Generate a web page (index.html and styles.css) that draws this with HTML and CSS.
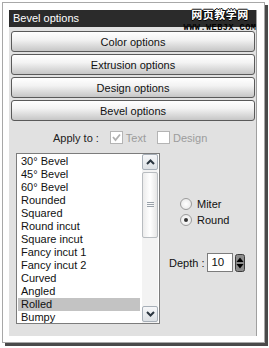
FILE: index.html
```html
<!DOCTYPE html>
<html>
<head>
<meta charset="utf-8">
<link rel="stylesheet" href="styles.css">
</head>
<body>
<div class="frame">
  <div class="panel">
    <div class="title">Bevel options
      <div class="wm"><span class="wm-cn">网页教学网</span><span class="wm-en">WWW.WEBJX.COM</span></div>
    </div>
    <div class="buttons">
      <div class="btn">Color options</div>
      <div class="btn">Extrusion options</div>
      <div class="btn">Design options</div>
      <div class="btn">Bevel options</div>
    </div>
    <div class="apply">
      <span class="apply-label">Apply to :</span>
      <span class="check"><svg width="11" height="11" viewBox="0 0 11 11"><polyline points="2,5 4.5,8 9,2.5" fill="none" stroke="#b0b0b0" stroke-width="1.8"/></svg></span><span class="dis">Text</span>
      <span class="check"></span><span class="dis">Design</span>
    </div>
    <div class="main">
      <div class="list">
        <ul class="items">
          <li>30° Bevel</li>
          <li>45° Bevel</li>
          <li>60° Bevel</li>
          <li>Rounded</li>
          <li>Squared</li>
          <li>Round incut</li>
          <li>Square incut</li>
          <li>Fancy incut 1</li>
          <li>Fancy incut 2</li>
          <li>Curved</li>
          <li>Angled</li>
          <li class="sel">Rolled</li>
          <li>Bumpy</li>
        </ul>
        <div class="scroll">
          <div class="sbtn"><svg width="9" height="6" viewBox="0 0 9 6"><polyline points="1,5 4.5,1.5 8,5" fill="none" stroke="#2b3640" stroke-width="2"/></svg></div>
          <div class="thumb"><svg width="7" height="6" viewBox="0 0 7 6"><path d="M0 0.5H7M0 2.5H7M0 4.5H7" stroke="#9aa2aa" stroke-width="1"/></svg></div>
          <div class="track"></div>
          <div class="sbtn"><svg width="9" height="6" viewBox="0 0 9 6"><polyline points="1,1 4.5,4.5 8,1" fill="none" stroke="#2b3640" stroke-width="2"/></svg></div>
        </div>
      </div>
      <div class="side">
        <div class="radios">
          <div class="radio"><span class="rb"></span><span>Miter</span></div>
          <div class="radio"><span class="rb on"></span><span>Round</span></div>
        </div>
        <div class="depth">
          <span class="depth-label">Depth :</span>
          <span class="input">10</span>
          <svg class="spin" width="10" height="18" viewBox="0 0 10 18"><rect x="0.5" y="0.5" width="9" height="17" rx="2" fill="#8c8c8c" stroke="#3c3c3c"/><polygon points="1.5,8 5,3.5 8.5,8" fill="#000"/><polygon points="1.5,10 5,14.5 8.5,10" fill="#000"/></svg>
        </div>
      </div>
    </div>
  </div>
</div>
</body>
</html>
```

FILE: styles.css
```css
* { box-sizing: border-box; }
body {
  margin: 0;
  width: 269px;
  height: 348px;
  background: #fff;
  font-family: "Liberation Sans", Arial, sans-serif;
  font-size: 11px;
  color: #111;
  overflow: hidden;
}
.frame {
  margin: 2px 0 0 2px;
  width: 263px;
  height: 341px;
  border: 1px solid #a8a8a8;
  box-shadow: 3px 3px 0 #4a4a4a;
  padding: 7px 7px 6px 6px;
  background: #fff;
}
.panel {
  height: 100%;
  background: #e1e1e1;
  border-right: 1px solid #a0a0a0;
  display: flex;
  flex-direction: column;
}
.title {
  position: relative;
  height: 17px;
  background: #2b2b2b;
  color: #fff;
  font-size: 11px;
  line-height: 17px;
  padding-left: 4px;
}
.wm {
  position: absolute;
  right: -2px;
  top: -3px;
  width: 76px;
  display: flex;
  flex-direction: column;
  align-items: center;
}
.wm-cn {
  display: block;
  font-family: "Noto Sans CJK SC", sans-serif;
  font-weight: bold;
  font-size: 11px;
  line-height: 15px;
  height: 15px;
  color: #fff;
  letter-spacing: 0.5px;
  text-shadow: 1px 0 #000, -1px 0 #000, 0 1px #000, 0 -1px #000;
}
.wm-en {
  display: block;
  margin-top: 1px;
  font-family: "Liberation Mono", monospace;
  font-weight: bold;
  font-size: 8.5px;
  line-height: 10px;
  height: 10px;
  color: #000;
  letter-spacing: 0.5px;
  padding: 0 1px;
}
.buttons {
  display: flex;
  flex-direction: column;
  gap: 2px;
  padding: 4px 1px 0 2px;
}
.btn {
  height: 21px;
  border: 1px solid #5a5a5a;
  border-radius: 3px;
  background: linear-gradient(#ffffff 0%, #f3f3f3 40%, #c6c6c6 100%);
  text-align: center;
  line-height: 20px;
  font-size: 11px;
  color: #111;
}
.apply {
  display: flex;
  align-items: center;
  height: 13px;
  margin-top: 10px;
  padding-left: 44px;
}
.apply-label { margin-right: 11px; color: #222; }
.check {
  width: 13px;
  height: 13px;
  border: 1px solid #b4b4b4;
  background: #fff;
  margin-right: 3px;
  display: flex;
  align-items: center;
  justify-content: center;
}
.dis { color: #9c9c9c; margin-right: 11px; }
.main {
  display: flex;
  margin-top: 9px;
  padding-left: 7px;
}
.list {
  width: 144px;
  height: 171px;
  border: 1px solid #7c7c7c;
  background: #fff;
  display: flex;
  padding-right: 1px;
}
.items {
  list-style: none;
  margin: 0;
  padding: 1px 2px 0 1px;
  flex: 1;
}
.items li {
  height: 13px;
  line-height: 13px;
  padding-left: 3px;
  white-space: nowrap;
}
.items li.sel { background: #c3c3c3; }
.scroll {
  width: 16px;
  display: flex;
  flex-direction: column;
  background: #f3f3f3;
  padding-bottom: 1px;
}
.sbtn {
  height: 16px;
  border: 1px solid #a7afb8;
  border-radius: 2px;
  background: linear-gradient(#f6f7f9, #dde1e5);
  display: flex;
  align-items: center;
  justify-content: center;
}
.thumb {
  height: 66px;
  margin-top: 2px;
  border: 1px solid #b8bcc0;
  border-radius: 2px;
  background: linear-gradient(90deg, #ececec, #ffffff 50%, #e6e6e6);
  display: flex;
  align-items: center;
  justify-content: center;
}
.track { flex: 1; }
.side { display: flex; flex-direction: column; }
.radios {
  margin-top: 45px;
  margin-left: 20px;
  display: flex;
  flex-direction: column;
  gap: 4px;
}
.radio {
  display: flex;
  align-items: center;
  height: 12px;
  gap: 5px;
}
.rb {
  width: 12px;
  height: 12px;
  border-radius: 50%;
  border: 1px solid #9b9b9b;
  background: radial-gradient(#ffffff, #e4e4e4);
  display: flex;
  align-items: center;
  justify-content: center;
}
.rb.on::after {
  content: "";
  width: 4px;
  height: 4px;
  border-radius: 50%;
  background: #333;
}
.depth {
  margin-top: 27px;
  margin-left: 9px;
  display: flex;
  align-items: center;
}
.depth-label { margin-right: 3px; }
.input {
  width: 26px;
  height: 19px;
  border: 1px solid #7c7c7c;
  background: #fff;
  padding-left: 3px;
  line-height: 17px;
  font-size: 11.5px;
}
.spin { margin-left: 2px; display: block; }
```
